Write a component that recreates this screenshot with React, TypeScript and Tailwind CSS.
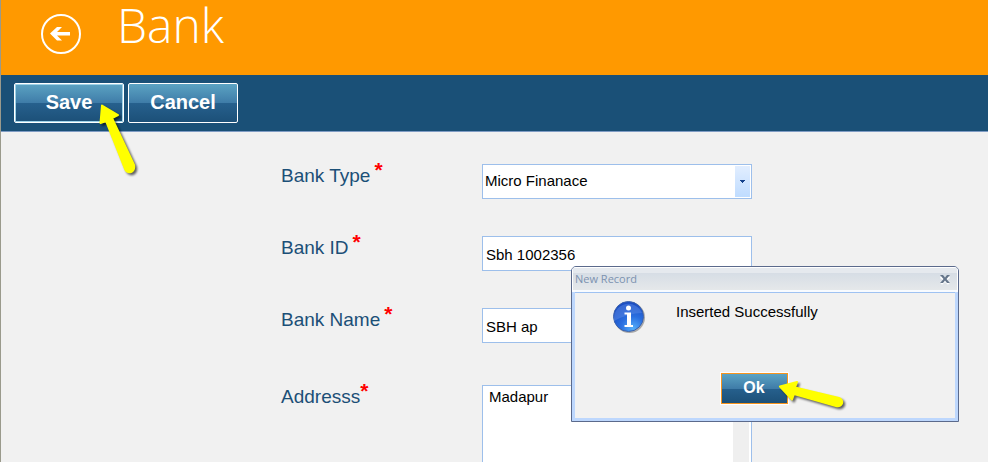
import type { ReactNode } from "react";

const field =
  "block w-full border border-[#9dbfeb] bg-white font-['Liberation_Sans',sans-serif] text-black outline-none";

const glossy =
  "bg-[linear-gradient(#5ba3c3_0%,#3f7ca8_50%,#26608d_51%,#1c5078_100%)] font-bold text-white";

function Row({
  id,
  label,
  tight = false,
  className,
  children,
}: {
  id: string;
  label: string;
  tight?: boolean;
  className: string;
  children: ReactNode;
}) {
  return (
    <div className={`flex items-start ${className}`}>
      <label
        htmlFor={id}
        className={`flex w-[201px] shrink-0 text-[19px] leading-6 text-[#1b4f77] ${tight ? "gap-0" : "gap-1"}`}
      >
        {label}
        <span className="text-[21px] leading-3 font-bold text-[#ff0000]">*</span>
      </label>
      <div className="relative w-[270px]">{children}</div>
    </div>
  );
}

function InfoIcon() {
  return (
    <svg viewBox="0 0 34 34" className="h-[34px] w-[34px] shrink-0" aria-hidden="true">
      <defs>
        <radialGradient id="info-fill" cx="0.65" cy="0.9" r="0.8">
          <stop offset="0" stopColor="#55b0fb" />
          <stop offset="0.5" stopColor="#2a6fe0" />
          <stop offset="1" stopColor="#1c4fc4" />
        </radialGradient>
      </defs>
      <circle cx="17.5" cy="16.5" r="15.5" fill="#a9a9a9" />
      <circle cx="16.5" cy="15.5" r="15" fill="url(#info-fill)" stroke="#3c62ac" />
      <path d="M2 17A14.5 14.5 0 0 1 30 12Q17 12 2 20Z" fill="#5f8de6" fillOpacity="0.45" />
      <circle cx="16.5" cy="7" r="2.5" fill="#fff" />
      <path d="M12.5 11.5h6.5v12.5h2v2h-8.5v-2h2.5v-10.5h-2.5z" fill="#fff" />
    </svg>
  );
}

export default function App() {
  return (
    <div className="relative flex h-screen flex-col overflow-hidden border-l border-[#9a9a8c] bg-[#f1f1f1] font-['Liberation_Sans',sans-serif]">
      <header className="flex h-[75px] shrink-0 items-start bg-[#ff9900] pl-10">
        <button type="button" aria-label="Back" className="mt-3.5 h-10 w-10">
          <svg viewBox="0 0 40 40" className="h-10 w-10" fill="none">
            <circle cx="20" cy="20" r="19" stroke="#fff" strokeWidth="2" />
            <path d="M9 19.5 16 13h5l-5 5h13v3.5h-13l5 5h-5z" fill="#fff" />
          </svg>
        </button>
        <h1 className="ml-9 font-['Open_Sans',sans-serif] text-[48px] leading-[50px] font-[350] text-white">
          Bank
        </h1>
      </header>

      <div className="flex h-[57px] shrink-0 items-start gap-1 border-b border-[#7f9cc4] bg-[#1a5077] px-[13px] pt-2">
        <button
          type="button"
          className={`h-10 w-[110px] rounded-xs border border-white pb-0.5 text-[20px] leading-6 shadow-[inset_0_0_0_1px_#9fd3e8] ${glossy}`}
        >
          Save
        </button>
        <button
          type="button"
          className={`h-10 w-[110px] rounded-xs border border-white pb-0.5 text-[20px] leading-6 ${glossy}`}
        >
          Cancel
        </button>
      </div>

      <form className="pt-8 pl-[280px]">
        <Row id="bank-type" label="Bank Type" className="h-[72px]">
          <select id="bank-type" className={`${field} h-[35px] appearance-none px-0.5 text-[15px]`}>
            <option>Micro Finanace</option>
          </select>
          <span className="pointer-events-none absolute inset-y-0.5 right-0.5 flex w-[15px] items-center justify-center bg-linear-to-b from-[#e2eeff] to-[#bfdcff]">
            <svg viewBox="0 0 5 3" className="h-[3px] w-[5px]" shapeRendering="crispEdges">
              <path d="M0 0h5v1h-1v1h-1v1h-1v-1h-1v-1h-1z" fill="#15428b" />
            </svg>
          </span>
        </Row>
        <Row id="bank-id" label="Bank ID" className="h-[72px]">
          <input id="bank-id" defaultValue="Sbh 1002356" className={`${field} h-[35px] px-[3px] pt-0.5 text-[15px]`} />
        </Row>
        <Row id="bank-name" label="Bank Name" className="h-[77px]">
          <input id="bank-name" defaultValue="SBH ap" className={`${field} h-[35px] px-[3px] pt-0.5 text-[15px]`} />
        </Row>
        <Row id="address" label="Addresss" tight className="h-[120px]">
          <div className="flex h-[110px] border border-[#9dbfeb] bg-white pr-0.5">
            <textarea
              id="address"
              defaultValue="Madapur"
              className="h-full flex-1 resize-none overflow-hidden px-1.5 py-px text-[15px] leading-5 text-black outline-none"
            />
            <div className="w-4 bg-[#efefef]" />
          </div>
        </Row>
      </form>

      <section
        role="dialog"
        aria-labelledby="dialog-title"
        className="absolute top-[266px] left-[570px] flex h-[156px] w-[388px] flex-col overflow-hidden rounded-t-[5px] border border-[#5b6a8c] bg-[#bdd7fd]"
      >
        <div className="flex h-[25px] shrink-0 items-center justify-between border border-b-2 border-white border-b-[#f8fbff] bg-[linear-gradient(#e5e9ee_0_5px,#d6dde5_5px,#e5e8ea)] pr-1.5 pl-0.5">
          <h2 id="dialog-title" className="font-['Open_Sans',sans-serif] text-[11px] leading-4 text-[#7c92b0]">
            New Record
          </h2>
          <button type="button" aria-label="Close" className="h-3 w-3">
            <svg viewBox="0 0 12 12" className="h-3 w-3">
              <path d="M2 3.5l8 7M10 3.5l-8 7" stroke="#fff" strokeWidth="3" />
              <path d="M1 2h3l2 2.5L8 2h3L7.5 6l3.500 4H8L6 7.5 4 10H1l3.500-4z" fill="#66768b" />
            </svg>
          </button>
        </div>
        <div className="mx-[3px] mb-[3px] flex flex-1 flex-col items-center border-t border-[#9fc2f2] bg-[#f1f1f1] pt-2">
          <div className="flex w-full items-start gap-[30px] pl-[37px]">
            <InfoIcon />
            <p className="pt-px text-[15px] leading-5 text-black">Inserted Successfully</p>
          </div>
          <button
            type="button"
            className={`mt-[38px] mr-[22px] h-[31px] w-[67px] border border-[#f7941d] pb-0.5 text-[16px] leading-5 outline outline-white ${glossy}`}
          >
            Ok
          </button>
        </div>
      </section>

      {/* pointers at the two clicks */}
      <svg
        viewBox="0 0 50 80"
        className="pointer-events-none absolute top-[100px] left-[94px] h-20 w-[50px] drop-shadow-[2px_2px_1px_#00000099]"
        aria-hidden="true"
      >
        <path
          d="M7 5.5 23 15 17 18 39 65Q40 70 36 72Q32 73 30 69L11 21 5.5 23Z"
          fill="#ffff00"
          stroke="#ffff00"
          strokeWidth="2"
          strokeLinejoin="round"
        />
      </svg>
      <svg
        viewBox="0 0 80 40"
        className="pointer-events-none absolute top-[374px] left-[770px] h-10 w-20 drop-shadow-[2px_2px_1px_#00000099]"
        aria-hidden="true"
      >
        <path
          d="M9 12.5 26 8 24 13.5 68 24Q72 26 71 29.5Q69 33 65 32L23 20 21 25.5Z"
          fill="#ffff00"
          stroke="#ffff00"
          strokeWidth="2"
          strokeLinejoin="round"
        />
      </svg>
    </div>
  );
}
